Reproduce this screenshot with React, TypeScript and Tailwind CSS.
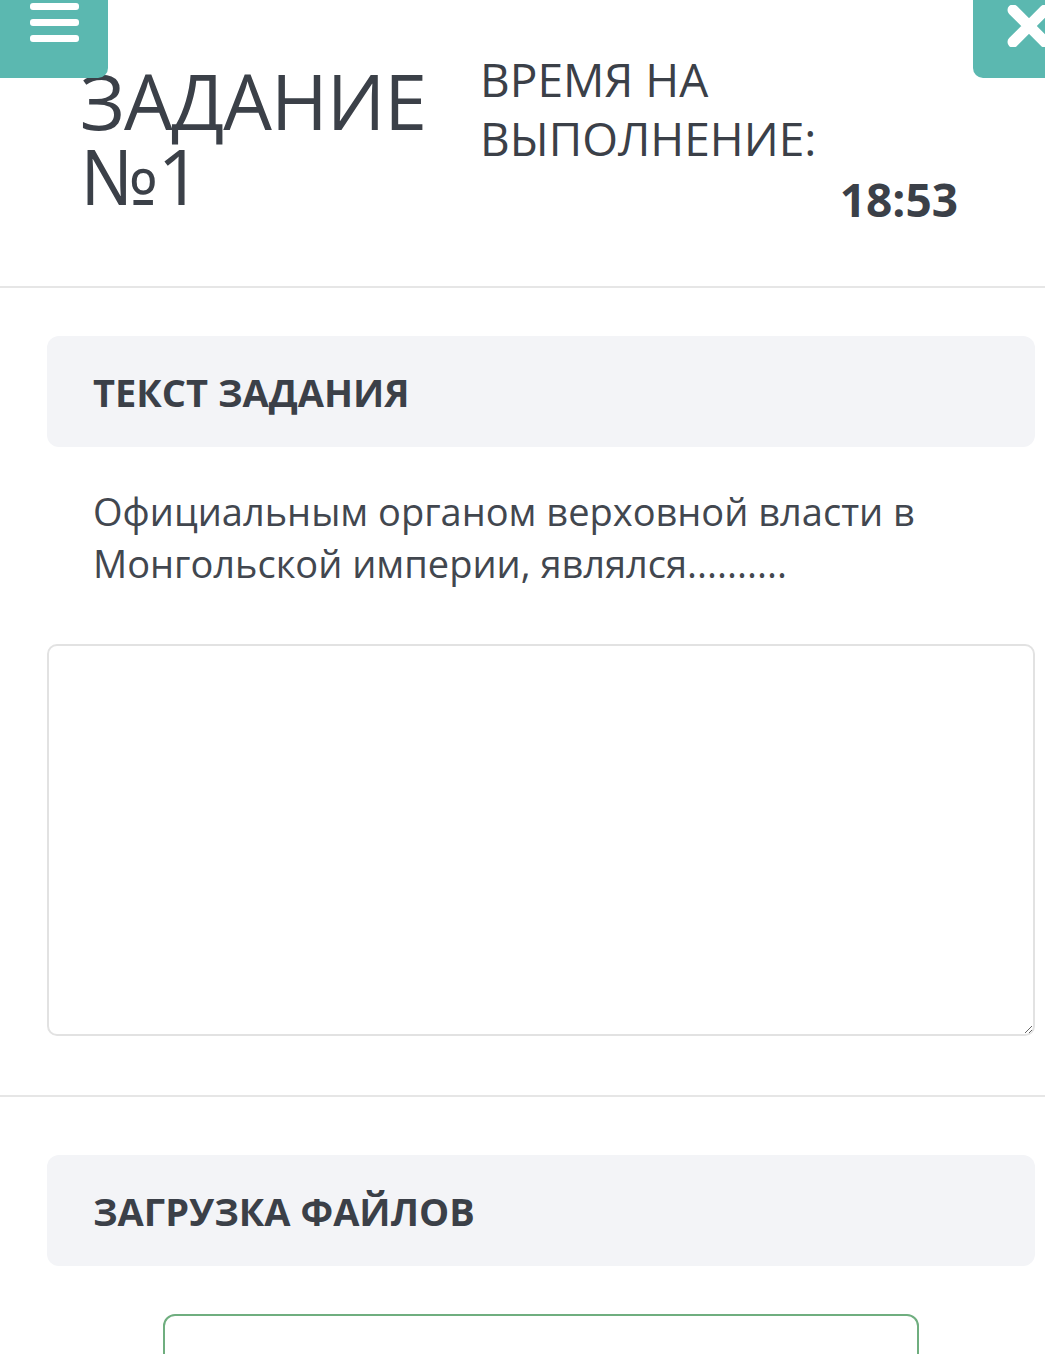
import { useState } from 'react';

export default function App() {
    const [answer, setAnswer] = useState('');

    return (
        <div className="relative min-h-screen bg-white text-[#3b4048]" style={{ fontFamily: '"Open Sans", "Noto Sans", sans-serif' }}>
            {/* плавающие кнопки */}
            <button className="absolute left-0 top-0 z-10 flex h-[78px] w-[108px] flex-col items-center gap-[9px] rounded-br-[10px] bg-[#5bb8b0] pt-[3px]">
                <span className="h-[7px] w-[49px] rounded-[3px] bg-white" />
                <span className="h-[7px] w-[49px] rounded-[3px] bg-white" />
                <span className="h-[7px] w-[49px] rounded-[3px] bg-white" />
            </button>
            <button className="absolute right-0 top-0 z-10 h-[78px] w-[72px] overflow-hidden rounded-bl-[10px] bg-[#5bb8b0]">
                <svg className="absolute left-[34px] top-[5px]" width="44" height="42" viewBox="0 0 44 42">
                    <path d="M6 5 L38 37 M38 5 L6 37" stroke="white" strokeWidth="11" strokeLinecap="round" />
                </svg>
            </button>

            {/* HEADER */}
            <header className="flex h-[288px] border-b-2 border-[#e6e6e6] pt-[63px]">
                <h1 className="w-[480px] shrink-0 pl-[80px] text-[77px] font-normal leading-[75px] tracking-[-1px]">
                    ЗАДАНИЕ<br />№1
                </h1>
                <div className="flex w-[478px] flex-col">
                    <div className="-mt-[13px] text-[46px] leading-[59px]">ВРЕМЯ НА<br />ВЫПОЛНЕНИЕ:</div>
                    <div className="mt-[1px] text-right text-[46px] font-bold leading-[60px]">18:53</div>
                </div>
            </header>

            <main className="ml-[47px] mr-[10px] pt-[48px]">
                <div className="flex h-[111px] items-center rounded-[12px] bg-[#f3f4f7] px-[46px]">
                    <h2 className="text-[38px] font-bold leading-none">ТЕКСТ ЗАДАНИЯ</h2>
                </div>
                <p className="px-[46px] pt-[38px] text-[38px] leading-[52px] text-[#42474f]">
                    Официальным органом верховной власти в Монгольской империи, являлся..........
                </p>
                <textarea
                    value={answer}
                    onChange={(e) => setAnswer(e.target.value)}
                    className="mt-[55px] block h-[392px] w-full rounded-[10px] border-2 border-[#e2e2e2] bg-white p-4 text-[30px] outline-none"
                />
            </main>

            <div className="mt-[59px] border-t-2 border-[#e6e6e6]" />

            <section className="ml-[47px] mr-[10px] pt-[58px]">
                <div className="flex h-[111px] items-center rounded-[12px] bg-[#f3f4f7] px-[46px]">
                    <h2 className="text-[38px] font-bold leading-none">ЗАГРУЗКА ФАЙЛОВ</h2>
                </div>
                <div className="mx-auto mt-[48px] h-[120px] w-[756px] rounded-[12px] border-2 border-[#6fae7f]" />
            </section>
        </div>
    );
}
